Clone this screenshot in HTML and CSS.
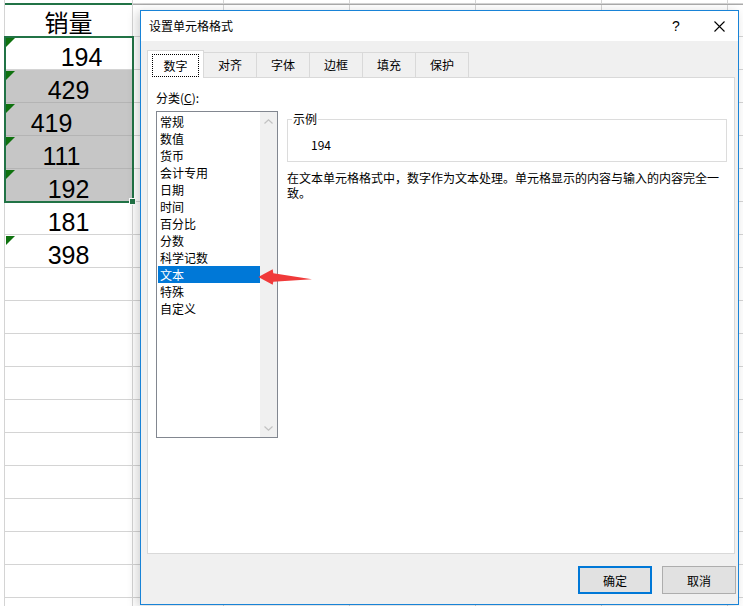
FILE: index.html
```html
<!DOCTYPE html>
<html lang="zh-CN">
<head>
  <meta charset="UTF-8">
  <meta name="viewport" content="width=device-width, initial-scale=1.0">
  <title>设置单元格格式</title>
  <link rel="stylesheet" href="styles.css">
</head>
<body>
  <div class="screen">
    <!-- 背后的表格 -->
    <div class="sheet">
      <div class="gutter"></div>
      <div class="col-a">
        <div class="col-top"></div>
        <div class="cell head">销量</div>
        <div class="cell flag to-right">194</div>
        <div class="cell flag sel">429</div>
        <div class="cell flag sel to-left">419</div>
        <div class="cell flag sel to-left-sm">111</div>
        <div class="cell flag sel">192</div>
        <div class="cell">181</div>
        <div class="cell flag">398</div>
        <div class="cell"></div>
        <div class="cell"></div>
        <div class="cell"></div>
        <div class="cell"></div>
        <div class="cell"></div>
        <div class="cell"></div>
        <div class="cell"></div>
        <div class="cell"></div>
        <div class="cell"></div>
        <div class="cell"></div>
        <div class="cell"></div>
        <div class="selection"><span class="handle"></span></div>
      </div>
      <div class="col-rest"></div>
    </div>

    <!-- 对话框 -->
    <div class="dialog">
      <div class="title-bar">
        <span class="title">设置单元格格式</span>
        <span class="help">?</span>
        <span class="close">
          <svg width="11" height="11" viewBox="0 0 11 11">
            <path d="M0.5 0.5 L10.5 10.5 M10.5 0.5 L0.5 10.5" stroke="#000" stroke-width="1.1" fill="none"></path>
          </svg>
        </span>
      </div>
      <div class="dialog-body">
        <div class="tabs">
          <div class="tab active"><span class="focus">数字</span></div>
          <div class="tab">对齐</div>
          <div class="tab">字体</div>
          <div class="tab">边框</div>
          <div class="tab">填充</div>
          <div class="tab">保护</div>
        </div>
        <div class="panel">
          <div class="category">
            <div class="label">分类(<u>C</u>):</div>
            <div class="listbox">
              <ul class="items">
                <li>常规</li>
                <li>数值</li>
                <li>货币</li>
                <li>会计专用</li>
                <li>日期</li>
                <li>时间</li>
                <li>百分比</li>
                <li>分数</li>
                <li>科学记数</li>
                <li class="current">文本</li>
                <li>特殊</li>
                <li>自定义</li>
              </ul>
              <div class="scrollbar">
                <svg width="9" height="5" viewBox="0 0 9 5">
                  <path d="M0.5 4.5 L4.5 0.8 L8.5 4.5" stroke="#c2c2c2" stroke-width="1.2" fill="none"></path>
                </svg>
                <svg width="9" height="5" viewBox="0 0 9 5">
                  <path d="M0.5 0.5 L4.5 4.2 L8.5 0.5" stroke="#c2c2c2" stroke-width="1.2" fill="none"></path>
                </svg>
              </div>
            </div>
          </div>
          <div class="detail">
            <fieldset class="sample">
              <legend>示例</legend>
              <div class="sample-value">194</div>
            </fieldset>
            <p class="desc">在文本单元格格式中，数字作为文本处理。单元格显示的内容与输入的内容完全一致。</p>
          </div>
        </div>
        <div class="buttons">
          <button class="btn primary">确定</button>
          <button class="btn">取消</button>
        </div>
      </div>
    </div>

    <!-- 红色箭头标注 -->
    <svg class="pointer" width="60" height="24" viewBox="0 0 60 24">
      <polygon points="3.3,12 17.7,4.3 18.3,8.3 57,14.3 18.3,16.7 17.7,19.8" fill="#f03a3a"></polygon>
    </svg>
  </div>
</body>
</html>
```

FILE: styles.css
```css
html,body {
  margin: 0;
  padding: 0;
  background: #fff;
}
body {
  font-family: "Noto Sans CJK SC", sans-serif;
  font-size: 12px;
  color: #000;
}
.screen {
  position: relative;
  width: 743px;
  height: 606px;
  overflow: hidden;
}

/* 表格部分 */
.sheet {
  display: flex;
  height: 606px;
}
.gutter {
  width: 4px;
}
.col-a {
  position: relative;
  width: 129px;
  box-sizing: border-box;
  border-left: 1px solid #d4d4d4;
  border-right: 1px solid #d4d4d4;
}
.col-top {
  height: 5px;
  box-sizing: border-box;
  border-bottom: 2px solid #217346;
}
.cell {
  position: relative;
  height: 33px;
  box-sizing: border-box;
  border-bottom: 1px solid #d4d4d4;
  padding-top: 7px;
  font-family: "Liberation Sans", Arial, sans-serif;
  font-size: 25px;
  line-height: 26px;
  text-align: center;
}
.cell.head {
  height: 32px;
  padding-top: 3px;
  font-family: "Noto Sans CJK SC", sans-serif;
  font-size: 24px;
  line-height: 27px;
}
.cell.sel {
  background: #c6c6c6;
  border-bottom-color: #b4b4b4;
}
/* 单元格里数字前的空格造成的偏移 */
.to-right {
  padding-left: 26px;
}
.to-left {
  padding-right: 34px;
}
.to-left-sm {
  padding-right: 14px;
}
/* 左上角绿色小三角：以文本形式存储的数字 */
.flag::before {
  content: '';
  position: absolute;
  top: 1px;
  left: 1px;
  border-top: 9px solid #0f720f;
  border-right: 9px solid transparent;
}
.selection {
  position: absolute;
  left: -1px;
  top: 36px;
  width: 130px;
  height: 167px;
  box-sizing: border-box;
  border: 2px solid #217346;
}
.handle {
  position: absolute;
  right: -4px;
  bottom: -4px;
  width: 5px;
  height: 5px;
  background: #217346;
  border: 1px solid #fff;
}
.col-rest {
  flex: 1;
  background:
    linear-gradient(#ababab, #ababab) 0 4px / 100% 1px no-repeat,
    linear-gradient(to right, #d4d4d4 1px, transparent 1px) 90px 0 / 126px 100%,
    linear-gradient(#d4d4d4 1px, transparent 1px) 0 36px / 100% 33px;
}

/* 对话框 */
.dialog {
  position: absolute;
  left: 140px;
  top: 10px;
  width: 599px;
  height: 595px;
  box-sizing: border-box;
  border: 1px solid #1883d7;
  background: #f0f0f0;
  box-shadow: -3px 2px 10px rgba(0, 0, 0, .18);
  display: flex;
  flex-direction: column;
}
.title-bar {
  height: 30px;
  background: #fff;
  display: flex;
  align-items: center;
  padding-left: 8px;
}
.title {
  flex: 1;
  line-height: 16px;
}
.help,
.close {
  width: 38px;
  height: 30px;
  display: flex;
  align-items: center;
  justify-content: center;
}
.help {
  margin-right: 5px;
  font-family: "Liberation Sans", Arial, sans-serif;
  font-size: 14px;
}
.dialog-body {
  flex: 1;
  padding: 9px 3px 0 6px;
}
.tabs {
  display: flex;
  align-items: flex-end;
  height: 27px;
}
.tab {
  width: 54px;
  height: 25px;
  box-sizing: border-box;
  margin-left: -1px;
  border: 1px solid #d9d9d9;
  border-bottom: none;
  background: #f0f0f0;
  text-align: center;
  line-height: 24px;
}
.tab.active {
  position: relative;
  z-index: 2;
  width: 57px;
  height: 28px;
  margin-left: 0;
  margin-bottom: -1px;
  padding: 3px 4px 1px;
  background: #fff;
}
.focus {
  display: block;
  border: 1px dotted #000;
  line-height: 21px;
}
.panel {
  position: relative;
  height: 477px;
  box-sizing: border-box;
  border: 1px solid #d9d9d9;
  background: #fff;
  display: flex;
  padding: 12px 6px 0 8px;
}
.label {
  line-height: 16px;
  margin-bottom: 5px;
}
.listbox {
  width: 122px;
  height: 327px;
  box-sizing: border-box;
  border: 1px solid #828790;
  display: flex;
}
.items {
  flex: 1;
  margin: 0;
  padding: 1px 0 0 1px;
  list-style: none;
}
.items li {
  height: 17px;
  line-height: 17px;
  padding-left: 2px;
}
.items li.current {
  background: #0078d7;
  color: #fff;
}
.scrollbar {
  width: 17px;
  background: #f0f0f0;
  display: flex;
  flex-direction: column;
  justify-content: space-between;
  align-items: center;
  padding: 7px 0 6px;
}
.detail {
  width: 440px;
  margin-left: 9px;
  padding-top: 21px;
}
.sample {
  margin: 0;
  padding: 10px 0 8px;
  min-width: 0;
  border: 1px solid #dcdcdc;
}
.sample legend {
  margin-left: 4px;
  padding: 0 1px;
  line-height: 16px;
}
.sample-value {
  padding-left: 23px;
  line-height: 16px;
}
.desc {
  margin: 8px 0 0;
  line-height: 15px;
}
.buttons {
  display: flex;
  justify-content: flex-end;
  gap: 10px;
  margin: 12px -1px 0 0;
}
.btn {
  width: 74px;
  height: 28px;
  padding: 0;
  background: #e1e1e1;
  border: 1px solid #adadad;
  font-family: "Noto Sans CJK SC", sans-serif;
  font-size: 12px;
  color: #000;
}
.btn.primary {
  border: 2px solid #0078d7;
}

.pointer {
  position: absolute;
  left: 255px;
  top: 265px;
}
```
